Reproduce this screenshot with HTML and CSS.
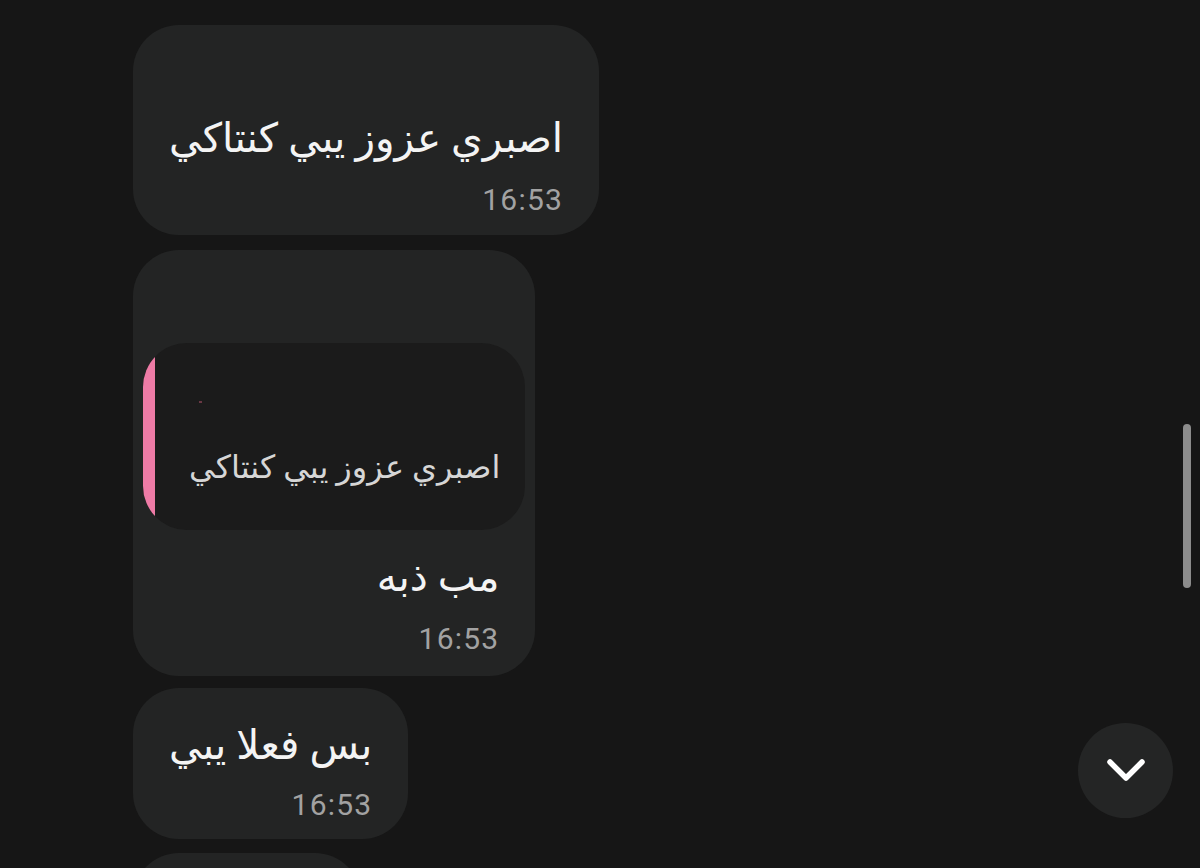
FILE: index.html
```html
<!DOCTYPE html>
<html lang="ar">
<head>
<meta charset="UTF-8" />
<title>Chat</title>
<link rel="stylesheet" href="styles.css">
</head>
<body>

<div class="chat">

	<div class="bubble">
		<p class="text">اصبري عزوز يبي كنتاكي</p>
		<div class="time">16:53</div>
	</div>

	<div class="bubble reply">
		<div class="quote">
			<span class="quote-name"></span>
			<p class="quote-text">اصبري عزوز يبي كنتاكي</p>
		</div>
		<p class="text">مب ذبه</p>
		<div class="time">16:53</div>
	</div>

	<div class="bubble short">
		<p class="text">بس فعلا يبي</p>
		<div class="time">16:53</div>
	</div>

	<div class="bubble next"></div>

</div>

<!-- scroll indicator -->
<div class="scrollbar"></div>

<!-- jump to bottom -->
<div class="jump">
	<svg width="40" height="26" viewBox="0 0 40 26">
		<path d="M4 4 L20 20 L36 4" fill="none" stroke="#fff" stroke-width="5.5" stroke-linecap="round" stroke-linejoin="round"/>
	</svg>
</div>

</body>
</html>
```

FILE: styles.css
```css
body
{
	margin: 0;
	height: 868px;
	overflow: hidden;
	background-color: #161616;
	font-family: Roboto, "DejaVu Sans", sans-serif;
	color: #f4f4f4;
}

.chat
{
	display: flex;
	flex-direction: column;
	align-items: flex-start;
	box-sizing: border-box;
	height: 868px;
	overflow: hidden;
	padding: 25px 0 0 133px;
}

.bubble
{
	flex-shrink: 0;
	direction: rtl;
	display: flex;
	flex-direction: column;
	align-items: flex-start;
	padding: 91px 36px 18px 36px;
	border-radius: 46px;
	background-color: #232424;
}

.bubble.reply
{
	margin-top: 15px;
	padding-top: 93px;
	padding-bottom: 20px;
}

.bubble.short
{
	margin-top: 12px;
	padding-top: 35px;
	padding-bottom: 17px;
}

.bubble.next
{
	margin-top: 14px;
	width: 228px;
	height: 120px;
	padding: 0;
}

.text
{
	margin: 0;
	font-size: 40.5px;
	line-height: 44px;
	white-space: nowrap;
}

.time
{
	direction: ltr;
	margin-top: 23px;
	font-size: 30px;
	line-height: 34px;
	letter-spacing: 1.2px;
	color: #a2a2a2;
}

.short .time
{
	margin-top: 21px;
}

.quote
{
	position: relative;
	overflow: hidden;
	margin: 0 -26px 25px -26px;
	padding: 106px 25px 45px 46px;
	border-radius: 44px;
	background-color: #1b1b1b;
}

.quote::after
{
	content: "";
	position: absolute;
	left: 0;
	top: 0;
	bottom: 0;
	width: 12px;
	background-color: #ee7ba6;
}

.quote-name
{
	position: absolute;
	left: 56px;
	top: 58px;
	width: 3px;
	height: 2px;
	background-color: #6a3844;
}

.quote-text
{
	margin: 0;
	font-size: 32px;
	line-height: 36px;
	color: #d6d6d6;
	white-space: nowrap;
}

.scrollbar
{
	position: absolute;
	right: 9px;
	top: 424px;
	width: 8px;
	height: 164px;
	border-radius: 4px;
	background-color: #8c8c8c;
}

.jump
{
	position: absolute;
	right: 27px;
	top: 723px;
	width: 95px;
	height: 95px;
	border-radius: 50%;
	background-color: #242525;
	display: flex;
	align-items: center;
	justify-content: center;
}
```
